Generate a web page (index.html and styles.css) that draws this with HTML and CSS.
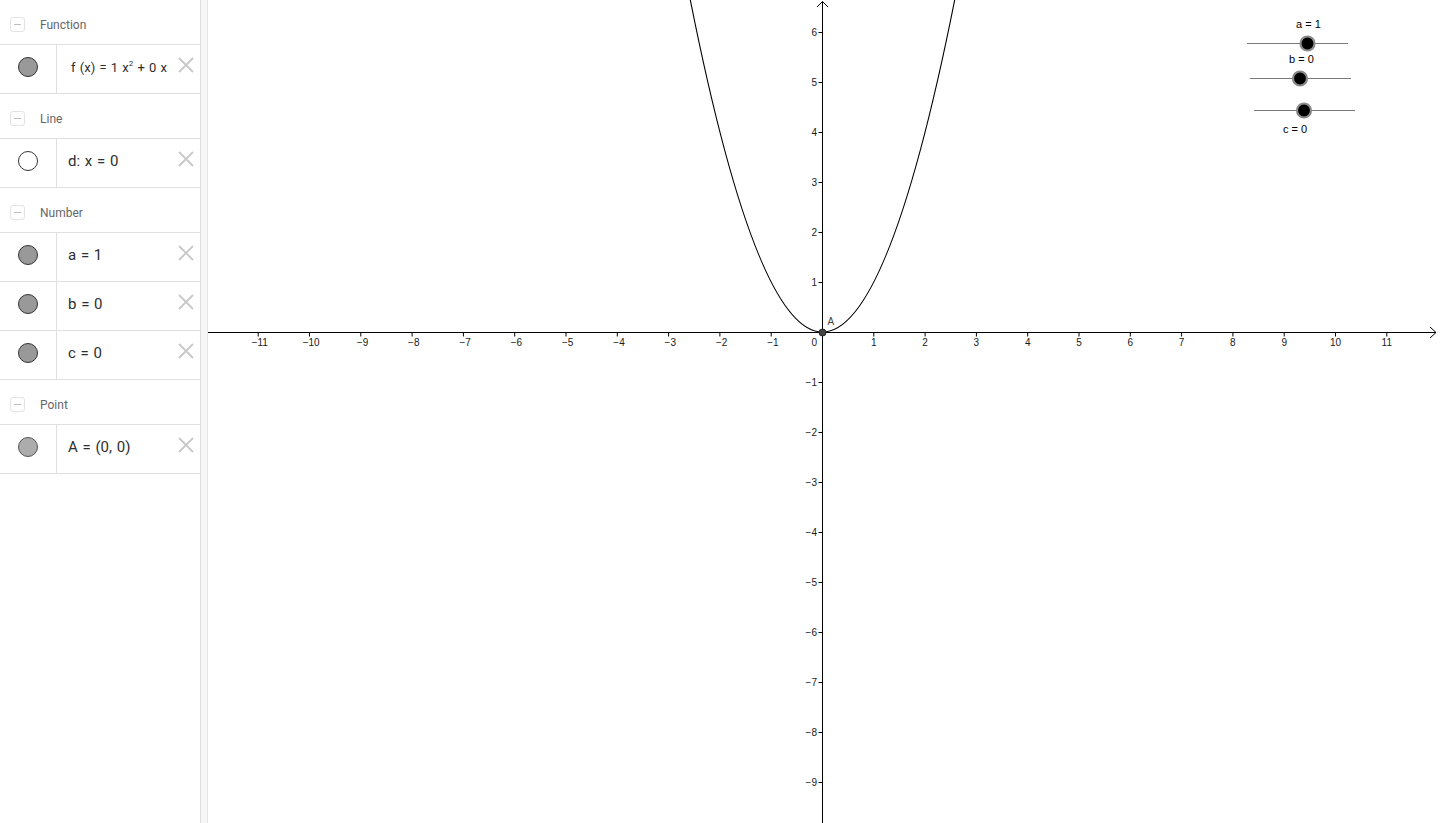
FILE: index.html
```html
<!DOCTYPE html>
<html lang="en">
<head>
<meta charset="utf-8">
<title>GeoGebra</title>
<link rel="stylesheet" href="styles.css">
</head>
<body>
<div class="app">
  <aside class="algebra">
    <div class="group-header"><span class="collapse"></span><span class="group-title">Function</span></div>
    <div class="item">
      <div class="marble"><span class="dot dot-gray"></span></div>
      <div class="item-body">
        <div class="formula formula-fn">f (x) = 1 x<sup>2</sup> + 0 x</div>
        <svg class="del" viewBox="0 0 16 16"><path d="M1 1 L15 15 M15 1 L1 15"/></svg>
      </div>
    </div>

    <div class="group-header"><span class="collapse"></span><span class="group-title">Line</span></div>
    <div class="item">
      <div class="marble"><span class="dot dot-white"></span></div>
      <div class="item-body">
        <div class="formula">d: x = 0</div>
        <svg class="del" viewBox="0 0 16 16"><path d="M1 1 L15 15 M15 1 L1 15"/></svg>
      </div>
    </div>

    <div class="group-header"><span class="collapse"></span><span class="group-title">Number</span></div>
    <div class="item">
      <div class="marble"><span class="dot dot-gray"></span></div>
      <div class="item-body">
        <div class="formula">a = 1</div>
        <svg class="del" viewBox="0 0 16 16"><path d="M1 1 L15 15 M15 1 L1 15"/></svg>
      </div>
    </div>
    <div class="item">
      <div class="marble"><span class="dot dot-gray"></span></div>
      <div class="item-body">
        <div class="formula">b = 0</div>
        <svg class="del" viewBox="0 0 16 16"><path d="M1 1 L15 15 M15 1 L1 15"/></svg>
      </div>
    </div>
    <div class="item">
      <div class="marble"><span class="dot dot-gray"></span></div>
      <div class="item-body">
        <div class="formula">c = 0</div>
        <svg class="del" viewBox="0 0 16 16"><path d="M1 1 L15 15 M15 1 L1 15"/></svg>
      </div>
    </div>

    <div class="group-header"><span class="collapse"></span><span class="group-title">Point</span></div>
    <div class="item">
      <div class="marble"><span class="dot dot-light"></span></div>
      <div class="item-body">
        <div class="formula">A = (0, 0)</div>
        <svg class="del" viewBox="0 0 16 16"><path d="M1 1 L15 15 M15 1 L1 15"/></svg>
      </div>
    </div>
  </aside>

  <div class="splitter"></div>

  <main class="graphics">
    <svg class="canvas" width="1232" height="823" viewBox="0 0 1232 823">
      <!-- axes -->
      <g class="axis">
        <line x1="0" y1="332.5" x2="1228" y2="332.5"/>
        <path class="arrow" d="M1222 327 L1228 332.5 L1222 338"/>
        <line x1="614.5" y1="823" x2="614.5" y2="1.5"/>
        <path class="arrow" d="M609 7 L614.5 1.5 L620 7"/>
      </g>
      <!-- x ticks -->
      <g class="axis">
        <line x1="50.2" y1="332" x2="50.2" y2="336.5"/>
        <line x1="101.5" y1="332" x2="101.5" y2="336.5"/>
        <line x1="152.8" y1="332" x2="152.8" y2="336.5"/>
        <line x1="204.1" y1="332" x2="204.1" y2="336.5"/>
        <line x1="255.4" y1="332" x2="255.4" y2="336.5"/>
        <line x1="306.7" y1="332" x2="306.7" y2="336.5"/>
        <line x1="358" y1="332" x2="358" y2="336.5"/>
        <line x1="409.3" y1="332" x2="409.3" y2="336.5"/>
        <line x1="460.6" y1="332" x2="460.6" y2="336.5"/>
        <line x1="511.9" y1="332" x2="511.9" y2="336.5"/>
        <line x1="563.2" y1="332" x2="563.2" y2="336.5"/>
        <line x1="665.8" y1="332" x2="665.8" y2="336.5"/>
        <line x1="717.1" y1="332" x2="717.1" y2="336.5"/>
        <line x1="768.4" y1="332" x2="768.4" y2="336.5"/>
        <line x1="819.7" y1="332" x2="819.7" y2="336.5"/>
        <line x1="871" y1="332" x2="871" y2="336.5"/>
        <line x1="922.3" y1="332" x2="922.3" y2="336.5"/>
        <line x1="973.6" y1="332" x2="973.6" y2="336.5"/>
        <line x1="1024.9" y1="332" x2="1024.9" y2="336.5"/>
        <line x1="1076.2" y1="332" x2="1076.2" y2="336.5"/>
        <line x1="1127.5" y1="332" x2="1127.5" y2="336.5"/>
        <line x1="1178.8" y1="332" x2="1178.8" y2="336.5"/>
      </g>
      <!-- y ticks -->
      <g class="axis">
        <line x1="610.5" y1="32.5" x2="614.5" y2="32.5"/>
        <line x1="610.5" y1="82.5" x2="614.5" y2="82.5"/>
        <line x1="610.5" y1="132.5" x2="614.5" y2="132.5"/>
        <line x1="610.5" y1="182.5" x2="614.5" y2="182.5"/>
        <line x1="610.5" y1="232.5" x2="614.5" y2="232.5"/>
        <line x1="610.5" y1="282.5" x2="614.5" y2="282.5"/>
        <line x1="610.5" y1="382.5" x2="614.5" y2="382.5"/>
        <line x1="610.5" y1="432.5" x2="614.5" y2="432.5"/>
        <line x1="610.5" y1="482.5" x2="614.5" y2="482.5"/>
        <line x1="610.5" y1="532.5" x2="614.5" y2="532.5"/>
        <line x1="610.5" y1="582.5" x2="614.5" y2="582.5"/>
        <line x1="610.5" y1="632.5" x2="614.5" y2="632.5"/>
        <line x1="610.5" y1="682.5" x2="614.5" y2="682.5"/>
        <line x1="610.5" y1="732.5" x2="614.5" y2="732.5"/>
        <line x1="610.5" y1="782.5" x2="614.5" y2="782.5"/>
      </g>
      <!-- x labels -->
      <g class="axis-label xl">
        <text x="51.8" y="346">−11</text>
        <text x="103.2" y="346">−10</text>
        <text x="154.5" y="346">−9</text>
        <text x="205.8" y="346">−8</text>
        <text x="257.1" y="346">−7</text>
        <text x="308.4" y="346">−6</text>
        <text x="359.7" y="346">−5</text>
        <text x="411" y="346">−4</text>
        <text x="462.3" y="346">−3</text>
        <text x="513.6" y="346">−2</text>
        <text x="564.9" y="346">−1</text>
        <text x="665.8" y="346">1</text>
        <text x="717.1" y="346">2</text>
        <text x="768.4" y="346">3</text>
        <text x="819.7" y="346">4</text>
        <text x="871" y="346">5</text>
        <text x="922.3" y="346">6</text>
        <text x="973.6" y="346">7</text>
        <text x="1024.9" y="346">8</text>
        <text x="1076.2" y="346">9</text>
        <text x="1127.5" y="346">10</text>
        <text x="1178.8" y="346">11</text>
      </g>
      <!-- y labels -->
      <g class="axis-label yl">
        <text x="609" y="36">6</text>
        <text x="609" y="86">5</text>
        <text x="609" y="136">4</text>
        <text x="609" y="186">3</text>
        <text x="609" y="236">2</text>
        <text x="609" y="286">1</text>
        <text x="609" y="346">0</text>
        <text x="609" y="386">−1</text>
        <text x="609" y="436">−2</text>
        <text x="609" y="486">−3</text>
        <text x="609" y="536">−4</text>
        <text x="609" y="586">−5</text>
        <text x="609" y="636">−6</text>
        <text x="609" y="686">−7</text>
        <text x="609" y="736">−8</text>
        <text x="609" y="786">−9</text>
      </g>
      <!-- parabola f(x) = x^2 -->
      <path class="curve" d="M476 -32.5 Q614.5 696.5 753 -32.5"/>
      <!-- point A -->
      <circle class="point" cx="614.5" cy="332.5" r="3.5"/>
      <text class="point-label" x="619.5" y="325">A</text>
      <!-- sliders -->
      <g class="slider">
        <text class="slider-label" x="1100.5" y="28">a = 1</text>
        <line class="slider-track" x1="1039" y1="43.5" x2="1140" y2="43.5"/>
        <circle class="slider-thumb" cx="1099.5" cy="43.5" r="7"/>
      </g>
      <g class="slider">
        <text class="slider-label" x="1093.5" y="63">b = 0</text>
        <line class="slider-track" x1="1042" y1="78.5" x2="1143" y2="78.5"/>
        <circle class="slider-thumb" cx="1092" cy="78.5" r="7"/>
      </g>
      <g class="slider">
        <text class="slider-label" x="1087" y="133">c = 0</text>
        <line class="slider-track" x1="1046" y1="110.5" x2="1147" y2="110.5"/>
        <circle class="slider-thumb" cx="1096" cy="110.5" r="7"/>
      </g>
    </svg>
  </main>
</div>
</body>
</html>
```

FILE: styles.css
```css
* { box-sizing: border-box; }

html, body {
  margin: 0;
  padding: 0;
  width: 1440px;
  height: 823px;
  overflow: hidden;
  background: #ffffff;
  font-family: Roboto, "Liberation Sans", Arial, sans-serif;
}

.app {
  display: flex;
  width: 1440px;
  height: 823px;
}

/* ---------- Algebra view ---------- */
.algebra {
  width: 200px;
  flex: 0 0 200px;
  height: 823px;
  background: #ffffff;
  display: flex;
  flex-direction: column;
}

.group-header {
  height: 45px;
  flex: 0 0 45px;
  display: flex;
  align-items: center;
  padding-top: 5px;
  border-bottom: 1px solid #e0e0e0;
}

.collapse {
  position: relative;
  width: 15px;
  height: 15px;
  margin-left: 10px;
  margin-right: 15px;
  border: 1px solid #e3e3e3;
  border-radius: 3px;
  background: #fff;
}

.collapse::after {
  content: "";
  position: absolute;
  left: 3px;
  right: 3px;
  top: 6px;
  height: 1px;
  background: #bdbdbd;
}

.group-title {
  font-size: 12px;
  color: #666666;
  line-height: 14px;
}

.item {
  height: 49px;
  flex: 0 0 49px;
  display: flex;
  border-bottom: 1px solid #e0e0e0;
}

.marble {
  width: 57px;
  flex: 0 0 57px;
  border-right: 1px solid #e0e0e0;
  display: flex;
  align-items: center;
  justify-content: center;
  padding-bottom: 4px;
}

.dot {
  width: 20px;
  height: 20px;
  border-radius: 50%;
  border: 1px solid #333333;
  margin-left: -1px;
}

.dot-gray { background: #999999; }
.dot-white { background: #ffffff; }
.dot-light { background: #acacac; border-color: #555555; }

.item-body {
  flex: 1;
  min-width: 0;
  display: flex;
  align-items: center;
  padding-left: 11px;
  padding-bottom: 4px;
}

.formula {
  flex: 1;
  min-width: 0;
  white-space: nowrap;
  font-size: 15px;
  color: #2e2e2e;
  word-spacing: 1px;
}

.formula-fn {
  font-size: 13px;
  padding-left: 3px;
}

.formula-fn sup {
  font-size: 8px;
  vertical-align: 6px;
  line-height: 0;
}

.del {
  width: 16px;
  height: 16px;
  flex: 0 0 16px;
  align-self: flex-start;
  margin-top: 12px;
  margin-left: 6px;
  margin-right: 6px;
}

.del path {
  stroke: #c8c8c8;
  stroke-width: 1.8;
  fill: none;
}

/* ---------- splitter ---------- */
.splitter {
  width: 8px;
  flex: 0 0 8px;
  height: 823px;
  background: #f6f6f6;
  border-left: 1px solid #dedede;
  border-right: 1px solid #e4e4e4;
}

/* ---------- Graphics view ---------- */
.graphics {
  flex: 1;
  height: 823px;
  overflow: hidden;
}

.canvas {
  display: block;
}

.axis line,
.axis path {
  stroke: #000000;
  stroke-width: 1;
  fill: none;
}

.axis-label text {
  font-family: "Liberation Sans", Arial, sans-serif;
  font-size: 10px;
  fill: #1a1a1a;
}

.xl text { text-anchor: middle; }
.yl text { text-anchor: end; }

.curve {
  fill: none;
  stroke: #000000;
  stroke-width: 1.1;
}

.point {
  fill: #444444;
  stroke: #222222;
  stroke-width: 1;
}

.point-label {
  font-family: "Liberation Sans", Arial, sans-serif;
  font-size: 10px;
  fill: #444444;
}

.slider-label {
  font-family: "Liberation Sans", Arial, sans-serif;
  font-size: 11px;
  fill: #000000;
  text-anchor: middle;
}

.slider-track {
  stroke: #7a7a7a;
  stroke-width: 1;
}

.slider-thumb {
  fill: #000000;
  stroke: #8a8a8a;
  stroke-width: 2.2;
}
```
